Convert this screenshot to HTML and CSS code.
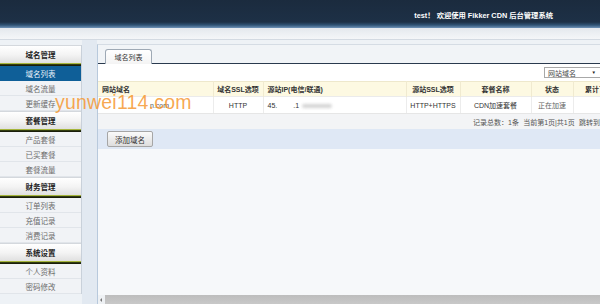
FILE: index.html
```html
<!DOCTYPE html>
<html lang="zh-CN">
<head>
<meta charset="utf-8">
<title>Fikker CDN 后台管理系统</title>
<link rel="stylesheet" href="styles.css">
</head>
<body>
<header class="topbar"><span class="welcome">test！ 欢迎使用 Fikker CDN 后台管理系统</span></header>
<div class="subbar"></div>
<div class="layout">
  <aside class="sidebar">
    <div class="section">
      <div class="sec-title">域名管理</div>
      <ul class="menu">
        <li class="active">域名列表</li>
        <li>域名流量</li>
        <li>更新缓存</li>
      </ul>
    </div>
    <div class="section">
      <div class="sec-title">套餐管理</div>
      <ul class="menu">
        <li>产品套餐</li>
        <li>已买套餐</li>
        <li>套餐流量</li>
      </ul>
    </div>
    <div class="section">
      <div class="sec-title">财务管理</div>
      <ul class="menu">
        <li>订单列表</li>
        <li>充值记录</li>
        <li>消费记录</li>
      </ul>
    </div>
    <div class="section">
      <div class="sec-title">系统设置</div>
      <ul class="menu">
        <li>个人资料</li>
        <li>密码修改</li>
      </ul>
    </div>
  </aside>
  <main class="main">
    <div class="tabs"><span class="tab">域名列表</span></div>
    <div class="toolbar"><div class="select"><span>网站域名</span><span class="caret">▼</span></div></div>
    <table class="grid">
      <colgroup>
        <col class="c1"><col class="c2"><col class="c3"><col class="c4"><col class="c5"><col class="c6"><col class="c7">
      </colgroup>
      <thead>
        <tr>
          <th class="left">网站域名</th>
          <th>域名SSL选项</th>
          <th class="left">源站IP(电信/联通)</th>
          <th>源站SSL选项</th>
          <th>套餐名称</th>
          <th>状态</th>
          <th>累计下行流量</th>
        </tr>
      </thead>
      <tbody>
        <tr>
          <td class="left domain">n.com</td>
          <td>HTTP</td>
          <td class="left">45.<span class="gap"></span>.1<span class="smear"></span></td>
          <td>HTTP+HTTPS</td>
          <td>CDN加速套餐</td>
          <td class="muted">正在加速</td>
          <td></td>
        </tr>
      </tbody>
    </table>
    <div class="pager">记录总数：1条<span class="sp"></span>当前第1页|共1页<span class="sp"></span>跳转到</div>
    <div class="actions"><button class="btn" type="button">添加域名</button></div>
    <div class="filler"></div>
    <div class="hscroll"><span class="arrow"></span><div class="track"></div></div>
  </main>
</div>
<div class="watermark">yunwei114.com</div>
</body>
</html>
```

FILE: styles.css
```css
* { box-sizing: border-box; }
html, body { margin: 0; padding: 0; }
body {
  width: 600px;
  height: 304px;
  overflow: hidden;
  position: relative;
  background: #eef2f6;
  font-family: "Liberation Sans", "Noto Sans CJK SC", sans-serif;
  color: #333;
}

.topbar {
  height: 28px;
  display: flex;
  justify-content: flex-end;
  align-items: center;
  padding-right: 47px;
  padding-top: 2px;
  background: linear-gradient(to bottom, #1b2b3e 0px, #1d3046 22px, #2f5274 25px, #6f93b8 28px);
}
.welcome {
  color: #ffffff;
  font-size: 7.3px;
  font-weight: bold;
  white-space: nowrap;
}

.subbar {
  height: 12px;
  background: linear-gradient(to bottom, #e4e8ed, #eef1f4 60%, #f4f6f8);
  border-bottom: 1px solid #d3dae2;
}

.layout {
  display: flex;
  align-items: flex-start;
  height: 264px;
  background: linear-gradient(to right, #eef2f6 0, #eef2f6 82px, #e2e9f1 82px, #e2e9f1 97px, #eef2f6 97px);
}

.sidebar {
  width: 82px;
  margin-top: 5px;
  background: #f1f3f6;
  border-right: 1px solid #c9d1da;
  flex-shrink: 0;
}
.sec-title {
  height: 18px;
  display: flex;
  align-items: center;
  justify-content: center;
  font-size: 7.5px;
  font-weight: bold;
  color: #222;
  background: linear-gradient(to bottom, #ffffff, #f4f4f4 50%, #e0e0e0);
  border-top: 1px solid #d4d8dd;
  position: relative;
}
.sec-title::after {
  content: "";
  position: absolute;
  left: 0; right: 0; bottom: -3px;
  height: 3px;
  background: linear-gradient(to bottom, #a6b53c 0, #a6b53c 1px, #3d4a12 1px, #0e0f08 3px);
  z-index: 1;
}
.menu {
  list-style: none;
  margin: 3px 0 0 0;
  padding: 0;
}
.menu li {
  height: 15px;
  display: flex;
  align-items: center;
  justify-content: center;
  font-size: 7.5px;
  color: #6c6c6c;
  border-bottom: 1px solid #e1e5ea;
}
.menu li.active {
  background: #0f5f98;
  color: #e9f2fa;
  border-bottom-color: #0f5f98;
}

.main {
  flex: 1;
  margin-left: 15px;
  margin-top: 4px;
  height: 260px;
  border-left: 1px solid #b8c9dc;
  border-top: 1px solid #d5dce4;
  background: #f6f8fa;
  display: flex;
  flex-direction: column;
  overflow: hidden;
}

.tabs {
  height: 19px;
  background: #f1f4f7;
  border-bottom: 1.5px solid #2a3a4e;
  padding-left: 7px;
  display: flex;
  align-items: flex-end;
}
.tab {
  width: 47px;
  height: 16px;
  margin-bottom: -1.5px;
  display: flex;
  align-items: center;
  justify-content: center;
  font-size: 7px;
  color: #333;
  background: linear-gradient(to bottom, #ffffff, #f3f3f3);
  border: 1px solid #9ea9b5;
  border-bottom: none;
  border-radius: 3px 3px 0 0;
}

.toolbar {
  height: 17px;
  background: #ffffff;
  display: flex;
  align-items: center;
  justify-content: flex-end;
  margin-right: -6px;
}
.select {
  width: 62px;
  height: 11px;
  border: 1px solid #a8a8a8;
  background: #fff;
  display: flex;
  align-items: center;
  justify-content: space-between;
  padding: 0 9px 0 3px;
  font-size: 7px;
  color: #444;
}
.caret { font-size: 4.5px; color: #222; }

.grid {
  table-layout: fixed;
  border-collapse: collapse;
  width: 541px;
  font-size: 7px;
}
.c1 { width: 115px; }
.c2 { width: 50px; }
.c3 { width: 143px; }
.c4 { width: 54px; }
.c5 { width: 71px; }
.c6 { width: 42px; }
.c7 { width: 66px; }
.grid th {
  height: 15px;
  background: #fdf9e2;
  font-weight: bold;
  color: #333;
  border-right: 1px solid #f0ead0;
  border-top: 1px solid #eee8cc;
  padding: 0;
  text-align: center;
  white-space: nowrap;
  overflow: hidden;
}
.grid th:last-child { overflow: visible; }
.grid td {
  height: 17px;
  background: #ffffff;
  border-right: 1px solid #ececec;
  border-top: 1px solid #ebebeb;
  border-bottom: 1px solid #e6e6e6;
  padding: 0;
  text-align: center;
  white-space: nowrap;
  color: #333;
}
.grid .left { text-align: left; padding-left: 4px; }
.grid td.domain { padding-left: 52px; color: #555; }
.grid td.muted { color: #666; }
.gap { display: inline-block; width: 16px; }
.smear {
  display: inline-block;
  width: 30px;
  height: 4px;
  margin-left: 3px;
  vertical-align: middle;
  background: #d4d4d4;
  border-radius: 3px;
  filter: blur(1.5px);
}

.pager {
  height: 15px;
  background: #f3f4f6;
  font-size: 7px;
  color: #555;
  display: flex;
  align-items: center;
  padding-left: 375px;
  white-space: nowrap;
}
.sp { display: inline-block; width: 14px; }

.actions {
  height: 20px;
  background: #dfe8f5;
  display: flex;
  align-items: center;
  padding-left: 9px;
}
.btn {
  width: 46px;
  height: 16px;
  padding: 0;
  font-family: "Liberation Sans", "Noto Sans CJK SC", sans-serif;
  font-size: 7.5px;
  color: #333;
  background: linear-gradient(to bottom, #fafafa, #dedede);
  border: 1px solid #a6a6a6;
  border-radius: 2px;
}

.filler { flex: 1; background: #f6f8fa; }

.hscroll {
  height: 9px;
  display: flex;
  align-items: stretch;
  background: #eef1f4;
}
.arrow {
  width: 6px;
  display: flex;
  align-items: center;
  justify-content: center;
}
.arrow::before {
  content: "";
  width: 0; height: 0;
  border-top: 2px solid transparent;
  border-bottom: 2px solid transparent;
  border-right: 2px solid #777;
}
.track {
  flex: 1;
  background: linear-gradient(to bottom, #bdbdbd, #c8c8c8);
  margin-left: 1px;
}

.watermark {
  position: absolute;
  left: 55px;
  top: 91px;
  font-family: "Liberation Sans", sans-serif;
  font-size: 19.5px;
  color: rgba(246, 152, 50, 0.85);
  white-space: nowrap;
  letter-spacing: 0.2px;
}
```
